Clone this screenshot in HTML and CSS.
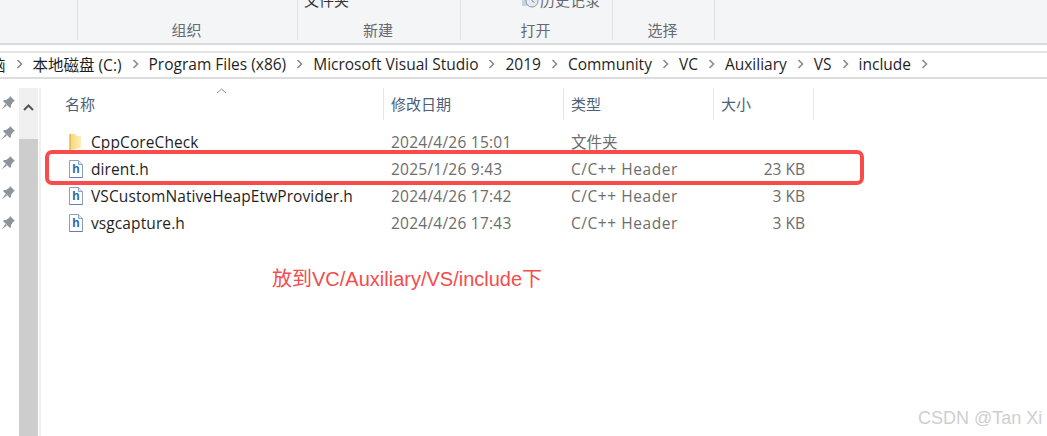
FILE: index.html
```html
<!DOCTYPE html>
<html lang="zh-CN">

<head>
    <meta charset="UTF-8">
    <title>include</title>
    <link rel="stylesheet" href="styles.css">
</head>

<body>
    <div class="ribbon">
        <div class="group group-first"></div>
        <div class="group group-org"><span class="group-label">组织</span></div>
        <div class="group group-new">
            <span class="clipped-item new-folder">文件夹</span>
            <span class="group-label">新建</span>
        </div>
        <div class="group group-open">
            <span class="clipped-item history">
                <svg class="history-icon" width="18" height="16" viewBox="0 0 18 16">
                    <rect x="1" y="1" width="11" height="13" fill="#c9d3e0"/>
                    <circle cx="11" cy="9" r="6" fill="#e8ecf2" stroke="#8c97a8"/>
                    <path d="M11 5.500V9L13.500 10.500" fill="none" stroke="#7d8899"/>
                </svg>
                历史记录
            </span>
            <span class="group-label">打开</span>
        </div>
        <div class="group group-select"><span class="group-label">选择</span></div>
    </div>

    <div class="address-bar">
        <span class="crumb crumb-clipped">电脑</span>
        <svg class="chevron" width="7" height="10" viewBox="0 0 7 10"><path d="M1.500 1L5.500 5L1.500 9"/></svg>
        <span class="crumb">本地磁盘 (C:)</span>
        <svg class="chevron" width="7" height="10" viewBox="0 0 7 10"><path d="M1.500 1L5.500 5L1.500 9"/></svg>
        <span class="crumb">Program Files (x86)</span>
        <svg class="chevron" width="7" height="10" viewBox="0 0 7 10"><path d="M1.500 1L5.500 5L1.500 9"/></svg>
        <span class="crumb">Microsoft Visual Studio</span>
        <svg class="chevron" width="7" height="10" viewBox="0 0 7 10"><path d="M1.500 1L5.500 5L1.500 9"/></svg>
        <span class="crumb">2019</span>
        <svg class="chevron" width="7" height="10" viewBox="0 0 7 10"><path d="M1.500 1L5.500 5L1.500 9"/></svg>
        <span class="crumb">Community</span>
        <svg class="chevron" width="7" height="10" viewBox="0 0 7 10"><path d="M1.500 1L5.500 5L1.500 9"/></svg>
        <span class="crumb">VC</span>
        <svg class="chevron" width="7" height="10" viewBox="0 0 7 10"><path d="M1.500 1L5.500 5L1.500 9"/></svg>
        <span class="crumb">Auxiliary</span>
        <svg class="chevron" width="7" height="10" viewBox="0 0 7 10"><path d="M1.500 1L5.500 5L1.500 9"/></svg>
        <span class="crumb">VS</span>
        <svg class="chevron" width="7" height="10" viewBox="0 0 7 10"><path d="M1.500 1L5.500 5L1.500 9"/></svg>
        <span class="crumb">include</span>
        <svg class="chevron" width="7" height="10" viewBox="0 0 7 10"><path d="M1.500 1L5.500 5L1.500 9"/></svg>
    </div>

    <div class="main">
        <div class="pins">
            <svg class="pin" width="14" height="14" viewBox="0 0 14 14"><path d="M9 0L14 5L12.500 5.500L10 9L10 11L9 12L2 5L3 4L5 4L8.500 1.500Z M4.500 8L0.500 13.500L6 9.500Z"/></svg>
            <svg class="pin" width="14" height="14" viewBox="0 0 14 14"><path d="M9 0L14 5L12.500 5.500L10 9L10 11L9 12L2 5L3 4L5 4L8.500 1.500Z M4.500 8L0.500 13.500L6 9.500Z"/></svg>
            <svg class="pin" width="14" height="14" viewBox="0 0 14 14"><path d="M9 0L14 5L12.500 5.500L10 9L10 11L9 12L2 5L3 4L5 4L8.500 1.500Z M4.500 8L0.500 13.500L6 9.500Z"/></svg>
            <svg class="pin" width="14" height="14" viewBox="0 0 14 14"><path d="M9 0L14 5L12.500 5.500L10 9L10 11L9 12L2 5L3 4L5 4L8.500 1.500Z M4.500 8L0.500 13.500L6 9.500Z"/></svg>
            <svg class="pin" width="14" height="14" viewBox="0 0 14 14"><path d="M9 0L14 5L12.500 5.500L10 9L10 11L9 12L2 5L3 4L5 4L8.500 1.500Z M4.500 8L0.500 13.500L6 9.500Z"/></svg>
        </div>

        <div class="scrollbar">
            <div class="scroll-up">
                <svg width="11" height="7" viewBox="0 0 11 7"><path d="M1 6L5.500 1.500L10 6"/></svg>
            </div>
            <div class="scroll-thumb"></div>
        </div>

        <div class="file-list">
            <div class="list-header">
                <div class="head-cell head-name">名称</div>
                <div class="head-cell">修改日期</div>
                <div class="head-cell">类型</div>
                <div class="head-cell">大小</div>
                <svg class="sort-arrow" width="11" height="6" viewBox="0 0 11 6"><path d="M1 5L5.500 1L10 5"/></svg>
            </div>

            <div class="file-row">
                <div class="name-cell">
                    <svg class="file-icon" width="16" height="18" viewBox="0 0 16 18">
                        <defs>
                            <linearGradient id="folderFill" x1="0" y1="0" x2="1" y2="0">
                                <stop offset="0" stop-color="#f7d774"/>
                                <stop offset="1" stop-color="#fdeeb5"/>
                            </linearGradient>
                        </defs>
                        <path d="M2 1H7L9 3H13V15L2 17Z" fill="url(#folderFill)"/>
                        <path d="M2 1V17" stroke="#e3b94f" stroke-width="1.500"/>
                    </svg>
                    CppCoreCheck
                </div>
                <div class="date-cell">2024/4/26 15:01</div>
                <div>文件夹</div>
                <div class="size-cell"></div>
            </div>
            <div class="file-row">
                <div class="name-cell">
                    <svg class="file-icon" width="16" height="18" viewBox="0 0 16 18">
                        <path d="M1.500 0.500H10.500L14.500 4.500V17.500H1.500Z" fill="#fdfdfe" stroke="#8fa0bd"/>
                        <path d="M10.500 0.500V4.500H14.500" fill="#dfe6f0" stroke="#8fa0bd"/>
                        <path d="M1.500 17.500H14.500" stroke="#5f7fb5"/>
                        <text class="file-letter" x="8" y="13">h</text>
                    </svg>
                    dirent.h
                </div>
                <div class="date-cell">2025/1/26 9:43</div>
                <div class="type-cell">C/C++ Header</div>
                <div class="size-cell">23 KB</div>
            </div>
            <div class="file-row">
                <div class="name-cell">
                    <svg class="file-icon" width="16" height="18" viewBox="0 0 16 18">
                        <path d="M1.500 0.500H10.500L14.500 4.500V17.500H1.500Z" fill="#fdfdfe" stroke="#8fa0bd"/>
                        <path d="M10.500 0.500V4.500H14.500" fill="#dfe6f0" stroke="#8fa0bd"/>
                        <path d="M1.500 17.500H14.500" stroke="#5f7fb5"/>
                        <text class="file-letter" x="8" y="13">h</text>
                    </svg>
                    VSCustomNativeHeapEtwProvider.h
                </div>
                <div class="date-cell">2024/4/26 17:42</div>
                <div class="type-cell">C/C++ Header</div>
                <div class="size-cell">3 KB</div>
            </div>
            <div class="file-row">
                <div class="name-cell">
                    <svg class="file-icon" width="16" height="18" viewBox="0 0 16 18">
                        <path d="M1.500 0.500H10.500L14.500 4.500V17.500H1.500Z" fill="#fdfdfe" stroke="#8fa0bd"/>
                        <path d="M10.500 0.500V4.500H14.500" fill="#dfe6f0" stroke="#8fa0bd"/>
                        <path d="M1.500 17.500H14.500" stroke="#5f7fb5"/>
                        <text class="file-letter" x="8" y="13">h</text>
                    </svg>
                    vsgcapture.h
                </div>
                <div class="date-cell">2024/4/26 17:43</div>
                <div class="type-cell">C/C++ Header</div>
                <div class="size-cell">3 KB</div>
            </div>
        </div>
    </div>

    <!-- annotations drawn on top of the screenshot -->
    <div class="mark-box"></div>
    <div class="mark-note">放到VC/Auxiliary/VS/include下</div>
    <div class="watermark">CSDN @Tan Xi</div>
</body>

</html>
```

FILE: styles.css
```css
/* Reset */
* {
    margin: 0;
    padding: 0;
    box-sizing: border-box;
}

body {
    width: 1047px;
    height: 436px;
    overflow: hidden;
    position: relative;
    background: #ffffff;
    font-family: 'Open Sans', 'Noto Sans CJK SC', sans-serif;
    font-size: 15px;
    color: #1f1f1f;
}

/* Ribbon */
.ribbon {
    display: flex;
    height: 45px;
    padding-bottom: 3px;
    background: #f4f5f7;
    border-bottom: 2px solid #dcdcdc;
    margin-bottom: 6px;
}

.group {
    position: relative;
    height: 40px;
    overflow: hidden;
    display: flex;
    flex-direction: column;
    justify-content: flex-end;
    align-items: center;
    border-right: 1px solid #e0e1e3;
    flex-shrink: 0;
}

.group-first { width: 78px; }
.group-org { width: 220px; }
.group-new { width: 163px; }
.group-open { width: 152px; }
.group-select { width: 102px; }

.group-label {
    line-height: 20px;
    margin-right: 2px;
    color: #666a70;
}

.clipped-item {
    display: flex;
    align-items: center;
    align-self: flex-start;
    line-height: 20px;
    white-space: nowrap;
    margin-bottom: 10px;
}

.new-folder {
    margin-left: 6px;
    color: #333333;
}

.history {
    margin-left: 60px;
    gap: 1px;
    color: #666a70;
}

.history-icon {
    flex-shrink: 0;
}

/* Address bar */
.address-bar {
    display: flex;
    align-items: center;
    height: 28px;
    padding-bottom: 2px;
    border-top: 2px solid #e3e3e3;
    border-bottom: 2px solid #dcdcdc;
    gap: 10px;
    overflow: hidden;
    white-space: nowrap;
    font-size: 15.5px;
}

.crumb-clipped {
    margin-left: -25.5px;
}

.chevron {
    flex-shrink: 0;
}

.chevron path {
    fill: none;
    stroke: #8a8a8a;
    stroke-width: 1.6;
}

/* Main area */
.main {
    display: flex;
    height: 357px;
    padding-top: 9px;
}

.pins {
    width: 19px;
    flex-shrink: 0;
    display: flex;
    flex-direction: column;
    gap: 16px;
    padding-top: 8px;
    padding-left: 1px;
}

.pin {
    fill: #8e949b;
}

.scrollbar {
    width: 19px;
    flex-shrink: 0;
    display: flex;
    flex-direction: column;
    background: #f0f0f0;
}

.scroll-up {
    height: 51px;
    padding-top: 7px;
    text-align: center;
}

.scroll-up path {
    fill: none;
    stroke: #555555;
    stroke-width: 2;
}

.scroll-thumb {
    flex: 1;
    background: #cdcdcd;
}

/* File list */
.file-list {
    flex: 1;
    margin-left: 1px;
    border-left: 2px solid #f0f0f0;
}

.list-header {
    position: relative;
    display: grid;
    grid-template-columns: 343px 180px 150px 100px;
    height: 32px;
    margin-bottom: 8px;
}

.head-cell {
    display: flex;
    align-items: center;
    padding-left: 7px;
    padding-bottom: 2px;
    border-right: 1px solid #e5e5e5;
    color: #4c607a;
}

.head-cell.head-name {
    padding-left: 24px;
}

.sort-arrow {
    position: absolute;
    left: 175px;
    top: 0;
}

.sort-arrow path {
    fill: none;
    stroke: #8a8f96;
}

.file-row {
    display: grid;
    grid-template-columns: 343px 180px 150px 100px;
    align-items: center;
    height: 27px;
    color: #6d6d6d;
    font-size: 15.5px;
    white-space: nowrap;
}

.file-row > div {
    padding-left: 7px;
}

.file-row > .name-cell {
    display: flex;
    align-items: center;
    gap: 7px;
    padding-left: 27px;
    letter-spacing: 0.1px;
    color: #1f1f1f;
}

.file-row > .date-cell {
    letter-spacing: 0.24px;
}

.file-row > .type-cell {
    letter-spacing: 0.55px;
}

.file-row > .size-cell {
    padding-left: 0;
    padding-right: 9px;
    text-align: right;
}

.file-icon {
    flex-shrink: 0;
}

.file-letter {
    font-family: 'Liberation Sans', sans-serif;
    font-size: 12px;
    font-weight: 700;
    text-anchor: middle;
    fill: #2a63b0;
}

/* Annotations */
.mark-box {
    position: absolute;
    left: 45px;
    top: 150px;
    width: 819px;
    height: 35px;
    border: 4px solid #fa4b4b;
    border-radius: 7px;
}

.mark-note {
    position: absolute;
    left: 272px;
    top: 266px;
    font-family: 'Liberation Sans', 'Noto Sans CJK SC', sans-serif;
    font-size: 20px;
    line-height: 26px;
    color: #f44c4c;
    white-space: nowrap;
}

.watermark {
    position: absolute;
    left: 918px;
    top: 409px;
    font-family: 'Liberation Sans', sans-serif;
    font-size: 18px;
    line-height: 18px;
    color: #cfcfcf;
    white-space: nowrap;
}
```
